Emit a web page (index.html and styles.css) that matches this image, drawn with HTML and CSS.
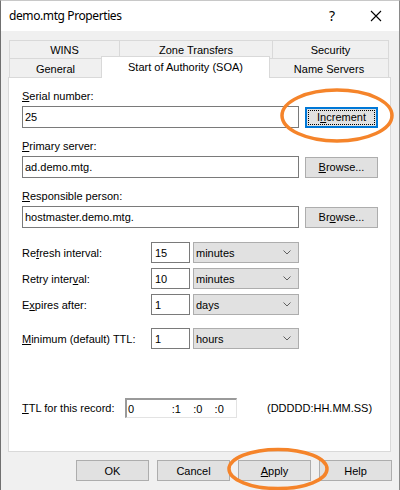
FILE: index.html
```html
<!DOCTYPE html>
<html>
<head>
<meta charset="utf-8">
<link rel="stylesheet" href="styles.css">
</head>
<body>
<div class="window">
  <div class="titlebar">
    <span class="title">demo.mtg Properties</span>
    <span class="help-glyph">?</span>
    <svg class="close" width="12" height="12" viewBox="0 0 12 12"><path d="M1 1 L11 11 M11 1 L1 11" stroke="#000" stroke-width="1.1" fill="none"/></svg>
  </div>
  <div class="body">
    <div class="tabs">
      <div class="tabrow back">
        <div class="tab t-wins">WINS</div>
        <div class="tab t-zone">Zone Transfers</div>
        <div class="tab t-sec">Security</div>
      </div>
      <div class="tabrow front">
        <div class="tab t-gen">General</div>
        <div class="tab t-soa selected">Start of Authority (SOA)</div>
        <div class="tab t-ns">Name Servers</div>
      </div>
    </div>
    <div class="panel">
      <div class="group first">
        <div class="label"><u>S</u>erial number:</div>
        <div class="field-row">
          <div class="textbox">25</div>
          <div class="btn focused"><span class="focus-ring">I<u>n</u>crement</span></div>
        </div>
      </div>
      <div class="group">
        <div class="label"><u>P</u>rimary server:</div>
        <div class="field-row">
          <div class="textbox">ad.demo.mtg.</div>
          <div class="btn"><u>B</u>rowse...</div>
        </div>
      </div>
      <div class="group">
        <div class="label"><u>R</u>esponsible person:</div>
        <div class="field-row">
          <div class="textbox">hostmaster.demo.mtg.</div>
          <div class="btn">Br<u>o</u>wse...</div>
        </div>
      </div>
      <div class="intervals">
        <div class="irow">
          <div class="ilabel">Re<u>f</u>resh interval:</div>
          <div class="numbox">15</div>
          <div class="combo"><span>minutes</span><svg class="chev" width="8" height="5" viewBox="0 0 8 5"><path d="M0.5 0.5 L4 4 L7.5 0.5" stroke="#606060" stroke-width="1" fill="none"/></svg></div>
        </div>
        <div class="irow">
          <div class="ilabel">Retry inter<u>v</u>al:</div>
          <div class="numbox">10</div>
          <div class="combo"><span>minutes</span><svg class="chev" width="8" height="5" viewBox="0 0 8 5"><path d="M0.5 0.5 L4 4 L7.5 0.5" stroke="#606060" stroke-width="1" fill="none"/></svg></div>
        </div>
        <div class="irow">
          <div class="ilabel">E<u>x</u>pires after:</div>
          <div class="numbox">1</div>
          <div class="combo"><span>days</span><svg class="chev" width="8" height="5" viewBox="0 0 8 5"><path d="M0.5 0.5 L4 4 L7.5 0.5" stroke="#606060" stroke-width="1" fill="none"/></svg></div>
        </div>
        <div class="irow min">
          <div class="ilabel"><u>M</u>inimum (default) TTL:</div>
          <div class="numbox">1</div>
          <div class="combo"><span>hours</span><svg class="chev" width="8" height="5" viewBox="0 0 8 5"><path d="M0.5 0.5 L4 4 L7.5 0.5" stroke="#606060" stroke-width="1" fill="none"/></svg></div>
        </div>
      </div>
      <div class="ttlrow">
        <div class="ttllabel"><u>T</u>TL for this record:</div>
        <div class="ttlbox">
          <span class="seg-d">0</span><span class="seg">:1</span><span class="seg">:0</span><span class="seg">:0</span>
        </div>
        <div class="hint">(DDDDD:HH.MM.SS)</div>
      </div>
    </div>
    <div class="buttons">
      <div class="btn">OK</div>
      <div class="btn">Cancel</div>
      <div class="btn"><u>A</u>pply</div>
      <div class="btn">Help</div>
    </div>
  </div>
  <svg class="marks" width="400" height="490" viewBox="0 0 400 490">
    <ellipse cx="337" cy="115.5" rx="55" ry="25.5" fill="none" stroke="#f5842a" stroke-width="3.5"/>
    <ellipse cx="278" cy="469" rx="49" ry="19.5" fill="none" stroke="#f5842a" stroke-width="3.5"/>
  </svg>
</div>
</body>
</html>
```

FILE: styles.css
```css
* { box-sizing: border-box; }
html, body { margin: 0; padding: 0; }
body {
  width: 400px;
  height: 490px;
  overflow: hidden;
  font-family: "Liberation Sans", Arial, sans-serif;
  font-size: 11px;
  color: #000;
  background: #f0f0f0;
}
u { text-decoration: underline; text-underline-offset: 1px; }

.window {
  position: relative;
  width: 400px;
  height: 490px;
  background: #f0f0f0;
  border-left: 1px solid #707070;
  border-right: 1px solid #8a8a8a;
  border-top: 1px solid #c8c8c8;
}

.titlebar {
  height: 30px;
  background: #fff;
  display: flex;
  align-items: center;
  padding-left: 8px;
}
.title {
  font-family: "Noto Sans", "Open Sans", sans-serif;
  font-size: 12px;
  letter-spacing: -0.4px;
  flex: 1;
  padding-bottom: 1px;
}
.help-glyph {
  font-family: "Noto Sans", sans-serif;
  font-size: 14px;
  margin-right: 35px;
  padding-bottom: 1px;
}
.close { margin-right: 17px; }

.body {
  padding: 9px 8px 0 7px;
}

.tabs { padding-left: 1px; }
.tabrow { display: flex; }
.tabrow.back { height: 18px; }
.tabrow.front { height: 19px; }
.tab {
  border: 1px solid #d9d9d9;
  border-bottom: none;
  background: #f0f0f0;
  display: flex;
  align-items: center;
  justify-content: center;
  white-space: nowrap;
  padding-top: 1px;
}
.tab + .tab { margin-left: -1px; }
.t-wins { width: 111px; }
.t-zone { width: 154px; }
.t-sec { width: 117px; }
.t-gen { width: 93px; }
.t-soa { width: 169px; }
.t-ns { width: 120px; }
.tab.selected {
  background: #fff;
  height: 22px;
  margin-top: -2px;
  position: relative;
  z-index: 2;
  padding-top: 0;
  padding-bottom: 2px;
}

.panel {
  background: #fff;
  border: 1px solid #d9d9d9;
  width: 383px;
  height: 375px;
  padding: 11px 0 0 13px;
}

.group { margin-top: 11px; }
.group.first { margin-top: 0; }
.label { height: 14px; line-height: 14px; white-space: nowrap; }
.field-row {
  margin-top: 3px;
  display: flex;
  align-items: center;
  gap: 6px;
}
.textbox {
  width: 277px;
  height: 22px;
  border: 1px solid #7a7a7a;
  padding-left: 2px;
  display: flex;
  align-items: center;
  background: #fff;
}

.btn {
  width: 73px;
  height: 21px;
  background: #e1e1e1;
  border: 1px solid #adadad;
  display: flex;
  align-items: center;
  justify-content: center;
  white-space: nowrap;
}
.btn.focused {
  border: 2px solid #0078d7;
  padding: 1px;
}
.focus-ring {
  width: 100%;
  height: 100%;
  border: 1px dotted #000;
  display: flex;
  align-items: center;
  justify-content: center;
}

.intervals {
  margin-top: 14px;
  display: flex;
  flex-direction: column;
  gap: 5px;
}
.irow {
  display: flex;
  align-items: center;
  height: 21px;
}
.irow.min { margin-top: 8px; }
.ilabel { width: 129px; white-space: nowrap; }
.numbox {
  width: 39px;
  height: 21px;
  border: 1px solid #7a7a7a;
  padding-left: 3px;
  display: flex;
  align-items: center;
}
.combo {
  margin-left: 3px;
  width: 106px;
  height: 21px;
  background: #e1e1e1;
  border: 1px solid #adadad;
  display: flex;
  align-items: center;
  justify-content: space-between;
  padding: 0 7px 0 2px;
}
.chev { display: block; }

.ttlrow {
  margin-top: 49px;
  display: flex;
  align-items: center;
  height: 20px;
}
.ttllabel { width: 103px; white-space: nowrap; }
.ttlbox {
  width: 112px;
  height: 20px;
  border-style: solid;
  border-width: 2px 1px 1px 2px;
  border-color: #9a9a9a #e3e3e3 #e3e3e3 #9a9a9a;
  display: flex;
  align-items: center;
  padding-left: 1px;
  background: #fff;
}
.seg-d { width: 45px; }
.seg { width: 22px; }
.hint { margin-left: 30px; white-space: nowrap; }

.buttons {
  margin-top: 8px;
  margin-right: -1px;
  display: flex;
  justify-content: flex-end;
  gap: 8px;
}

.marks {
  position: absolute;
  left: -1px;
  top: -1px;
  pointer-events: none;
}
```
